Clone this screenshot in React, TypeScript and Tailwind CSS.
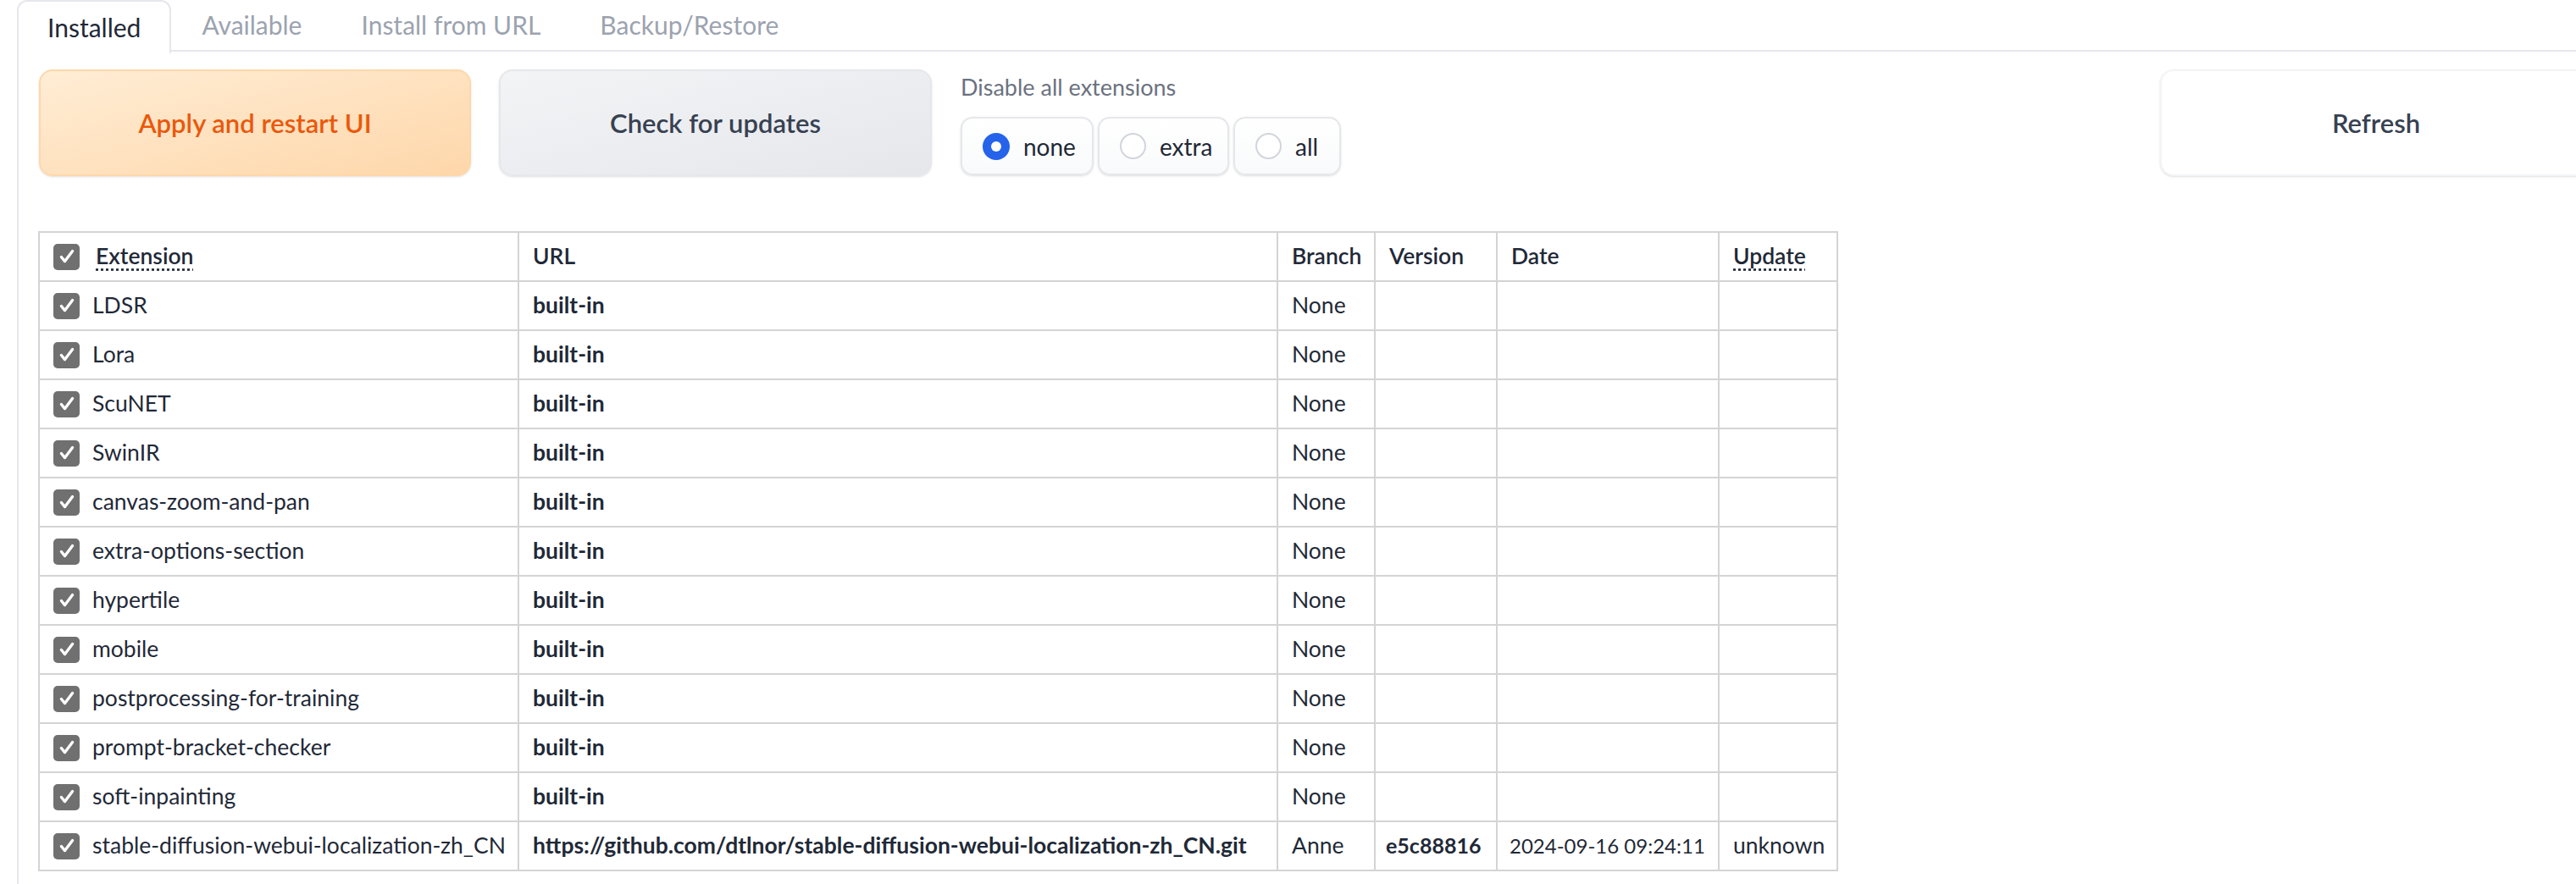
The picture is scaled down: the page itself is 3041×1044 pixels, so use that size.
import React from "react";

type Ext = {
  name: string;
  url: string;
  branch: string;
  version: string;
  date: string;
  update: string;
};

const builtIn = [
  "LDSR",
  "Lora",
  "ScuNET",
  "SwinIR",
  "canvas-zoom-and-pan",
  "extra-options-section",
  "hypertile",
  "mobile",
  "postprocessing-for-training",
  "prompt-bracket-checker",
  "soft-inpainting",
];

const rows: Ext[] = [
  ...builtIn.map((name) => ({
    name,
    url: "built-in",
    branch: "None",
    version: "",
    date: "",
    update: "",
  })),
  {
    name: "stable-diffusion-webui-localization-zh_CN",
    url: "https://github.com/dtlnor/stable-diffusion-webui-localization-zh_CN.git",
    branch: "Anne",
    version: "e5c88816",
    date: "2024-09-16 09:24:11",
    update: "unknown",
  },
];

function Check() {
  return (
    <span className="inline-flex w-[31px] h-[31px] shrink-0 items-center justify-center rounded-[5px] bg-[#707070]">
      <svg width="22" height="22" viewBox="0 0 20 20" fill="none">
        <path d="M4 10.5l3.8 4.6 8.2-11" stroke="white" strokeWidth="3" strokeLinecap="round" strokeLinejoin="round" />
      </svg>
    </span>
  );
}

function Radio({ label, checked, w }: { label: string; checked?: boolean; w: string }) {
  return (
    <label
      className={`flex h-[69px] items-center gap-[16px] rounded-[14px] border-2 border-[#e5e7eb] bg-gradient-to-b from-white to-[#f9fafb] pl-[24px] shadow-sm ${w}`}
    >
      {checked ? (
        <span className="flex h-[32px] w-[32px] items-center justify-center rounded-full bg-[#2563eb]">
          <span className="h-[12px] w-[12px] rounded-full bg-white" />
        </span>
      ) : (
        <span className="h-[31px] w-[31px] rounded-full border-2 border-[#d1d5db] bg-white" />
      )}
      <span className="text-[28px] text-[#1f2937]">{label}</span>
    </label>
  );
}

const cell = "border-2 border-[#d4d4d4] px-[16px] text-[26.5px] text-[#1f2937] whitespace-nowrap overflow-hidden";

export default function App() {
  return (
    <div className="w-full min-h-screen overflow-hidden bg-white font-['Lato',sans-serif]">
      <div className="ml-[20px]">
        {/* tabs */}
        <div className="flex h-[61px] border-b-2 border-[#e5e7eb]">
          <div className="-mb-[2px] flex h-[63px] items-center rounded-t-[12px] border-2 border-b-0 border-[#e5e7eb] bg-white px-[34px] text-[30px] text-[#1f2937]">
            Installed
          </div>
          {["Available", "Install from URL", "Backup/Restore"].map((t) => (
            <div key={t} className="ml-[2px] flex items-center px-[34px] text-[30px] text-[#9ca3af]">
              {t}
            </div>
          ))}
        </div>

        <div className="min-h-[983px] border-l-2 border-[#e5e7eb] pl-[24px] pt-[21px]">
          <div className="flex items-start">
            <button className="h-[126px] w-[510px] shrink-0 rounded-[16px] border-2 border-[#fed7aa] bg-gradient-to-br from-[#ffedd5] to-[#fed7aa] text-[31px] font-semibold text-[#ea580c] shadow-sm">
              Apply and restart UI
            </button>
            <button className="ml-[33px] h-[126px] w-[511px] shrink-0 rounded-[16px] border-2 border-[#e5e7eb] bg-gradient-to-br from-[#f3f4f6] to-[#e5e7eb] text-[31px] font-semibold text-[#374151] shadow-sm">
              Check for updates
            </button>
            <div className="ml-[34px] w-[1382px] shrink-0">
              <div className="h-[42px] text-[27px] leading-[42px] text-[#6b7280]">Disable all extensions</div>
              <div className="mt-[14px] flex gap-[5px]">
                <Radio label="none" checked w="w-[157px]" />
                <Radio label="extra" w="w-[155px]" />
                <Radio label="all" w="w-[127px]" />
              </div>
            </div>
            <button className="ml-[34px] h-[126px] w-[510px] shrink-0 rounded-[16px] border-2 border-[#f3f4f6] bg-white text-[31px] font-semibold text-[#374151] shadow-sm">
              Refresh
            </button>
          </div>

          <table className="-ml-[1px] mt-[65px] w-[2123px] table-fixed border-collapse">
            <colgroup>
              <col className="w-[566px]" />
              <col className="w-[896px]" />
              <col className="w-[115px]" />
              <col className="w-[144px]" />
              <col className="w-[262px]" />
              <col className="w-[140px]" />
            </colgroup>
            <thead>
              <tr className="h-[58px] text-left">
                <th className={`${cell} font-semibold`}>
                  <div className="flex items-center gap-[19px]">
                    <Check />
                    <abbr className="[text-decoration:underline_dotted] underline-offset-[5px]">Extension</abbr>
                  </div>
                </th>
                <th className={`${cell} font-semibold`}>URL</th>
                <th className={`${cell} font-semibold`}>Branch</th>
                <th className={`${cell} font-semibold`}>Version</th>
                <th className={`${cell} font-semibold`}>Date</th>
                <th className={`${cell} font-semibold`}>
                  <abbr className="[text-decoration:underline_dotted] underline-offset-[5px]">Update</abbr>
                </th>
              </tr>
            </thead>
            <tbody>
              {rows.map((r) => (
                <tr key={r.name} className="h-[58px]">
                  <td className={cell}>
                    <div className="flex items-center gap-[15px]">
                      <Check />
                      <span>{r.name}</span>
                    </div>
                  </td>
                  <td className={`${cell} font-bold`}>{r.url}</td>
                  <td className={cell}>{r.branch}</td>
                  <td className={`${cell} !px-[12px] !text-[25px] font-bold`}>{r.version}</td>
                  <td className={`${cell} !px-[14px] !text-[24px]`}>{r.date}</td>
                  <td className={cell}>{r.update}</td>
                </tr>
              ))}
            </tbody>
          </table>
        </div>
      </div>
    </div>
  );
}
